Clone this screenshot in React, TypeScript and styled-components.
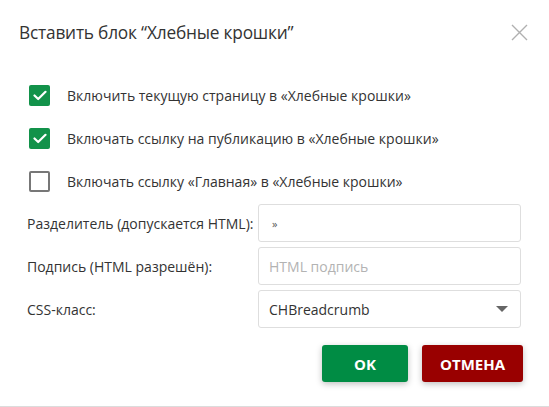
import * as React from 'react';
import styled, { createGlobalStyle } from 'styled-components';

const Global = createGlobalStyle`
  html, body { margin: 0; padding: 0; background: #fff; }
  body { font-family: "Open Sans", "Noto Sans", sans-serif; color: #333; }
  * { box-sizing: border-box; }
`;

const Dialog = styled.div`
  width: 549px;
  height: 407px;
  background: #fff;
  border-bottom: 1px solid #dcdcdc;
  display: flex;
  flex-direction: column;
`;

const Header = styled.div`
  height: 64px;
  padding: 0 20px 0 19px;
  display: flex;
  align-items: center;
  justify-content: space-between;
`;

const Title = styled.h1`
  margin: 0;
  font-size: 17.3px;
  font-weight: 400;
  color: #333;
  letter-spacing: -0.2px;
`;

const Close = styled.button`
  border: 0;
  background: none;
  padding: 0;
  width: 19px;
  height: 19px;
  display: flex;
  cursor: pointer;
`;

const Checks = styled.div`
  padding: 21px 0 0 29px;
  display: flex;
  flex-direction: column;
  gap: 22px;
`;

const CheckRow = styled.label`
  display: flex;
  align-items: center;
  gap: 17px;
  height: 21px;
  font-size: 14px;
  color: #333;
`;

const Box = styled.span<{ $on?: boolean }>`
  width: 21px;
  height: 21px;
  border-radius: 2px;
  flex: none;
  display: flex;
  align-items: center;
  justify-content: center;
  background: ${p => (p.$on ? '#12924a' : '#fff')};
  border: ${p => (p.$on ? '0' : '2px solid #777')};
`;

const Form = styled.div`
  margin-top: 12px;
  padding: 0 28px 0 27px;
  display: grid;
  grid-template-columns: 231px 1fr;
  row-gap: 5px;
`;

const Label = styled.div`
  font-size: 14px;
  color: #333;
  display: flex;
  align-items: center;
  height: 38px;
  white-space: nowrap;
`;

const Field = styled.div<{ $placeholder?: boolean }>`
  height: 38px;
  border: 1px solid #dedede;
  border-radius: 3px;
  padding: 0 10px;
  display: flex;
  align-items: center;
  justify-content: space-between;
  font-size: 14px;
  color: ${p => (p.$placeholder ? '#b3b3b3' : '#333')};
`;

const Sep = styled.span`
  font-size: 11px;
  color: #555;
  padding-left: 3px;
`;

const Arrow = styled.span`
  width: 0;
  height: 0;
  border-left: 6px solid transparent;
  border-right: 6px solid transparent;
  border-top: 6px solid #666;
  margin-right: 2px;
`;

const Footer = styled.div`
  margin-top: 17px;
  padding-right: 26px;
  display: flex;
  justify-content: flex-end;
  gap: 14px;
`;

const Button = styled.button<{ $tone: 'ok' | 'cancel' }>`
  height: 37px;
  min-width: ${p => (p.$tone === 'ok' ? '86px' : '101px')};
  border: 0;
  border-radius: 3px;
  background: ${p => (p.$tone === 'ok' ? '#008c44' : '#990000')};
  color: #fff;
  font-family: "Open Sans", sans-serif;
  font-weight: 700;
  font-size: 15px;
  box-shadow: 0 2px 6px rgba(0, 0, 0, 0.25);
  cursor: pointer;
`;

const Tick = () => (
  <svg width="14" height="11" viewBox="0 0 14 11">
    <path d="M1.5 5.5 L5.2 9 L12.5 1.8" fill="none" stroke="#fff" strokeWidth="2.2" strokeLinecap="round" strokeLinejoin="round" />
  </svg>
);

const checks = [
  { text: 'Включить текущую страницу в «Хлебные крошки»', on: true },
  { text: 'Включать ссылку на публикацию в «Хлебные крошки»', on: true },
  { text: 'Включать ссылку «Главная» в «Хлебные крошки»', on: false },
];

export default function App() {
  return (
    <>
      <Global />
      <Dialog>
        <Header>
          <Title>Вставить блок “Хлебные крошки”</Title>
          <Close aria-label="Закрыть">
            <svg width="19" height="19" viewBox="0 0 19 19">
              <path d="M2 2 L17 17 M17 2 L2 17" stroke="#b0b0b0" strokeWidth="1.4" />
            </svg>
          </Close>
        </Header>
        <Checks>
          {checks.map(c => (
            <CheckRow key={c.text}>
              <Box $on={c.on}>{c.on && <Tick />}</Box>
              {c.text}
            </CheckRow>
          ))}
        </Checks>
        <Form>
          <Label>Разделитель (допускается HTML):</Label>
          <Field><Sep>»</Sep></Field>
          <Label>Подпись (HTML разрешён):</Label>
          <Field $placeholder>HTML подпись</Field>
          <Label>CSS-класс:</Label>
          <Field>CHBreadcrumb<Arrow /></Field>
        </Form>
        <Footer>
          <Button $tone="ok">OK</Button>
          <Button $tone="cancel">ОТМЕНА</Button>
        </Footer>
      </Dialog>
    </>
  );
}
